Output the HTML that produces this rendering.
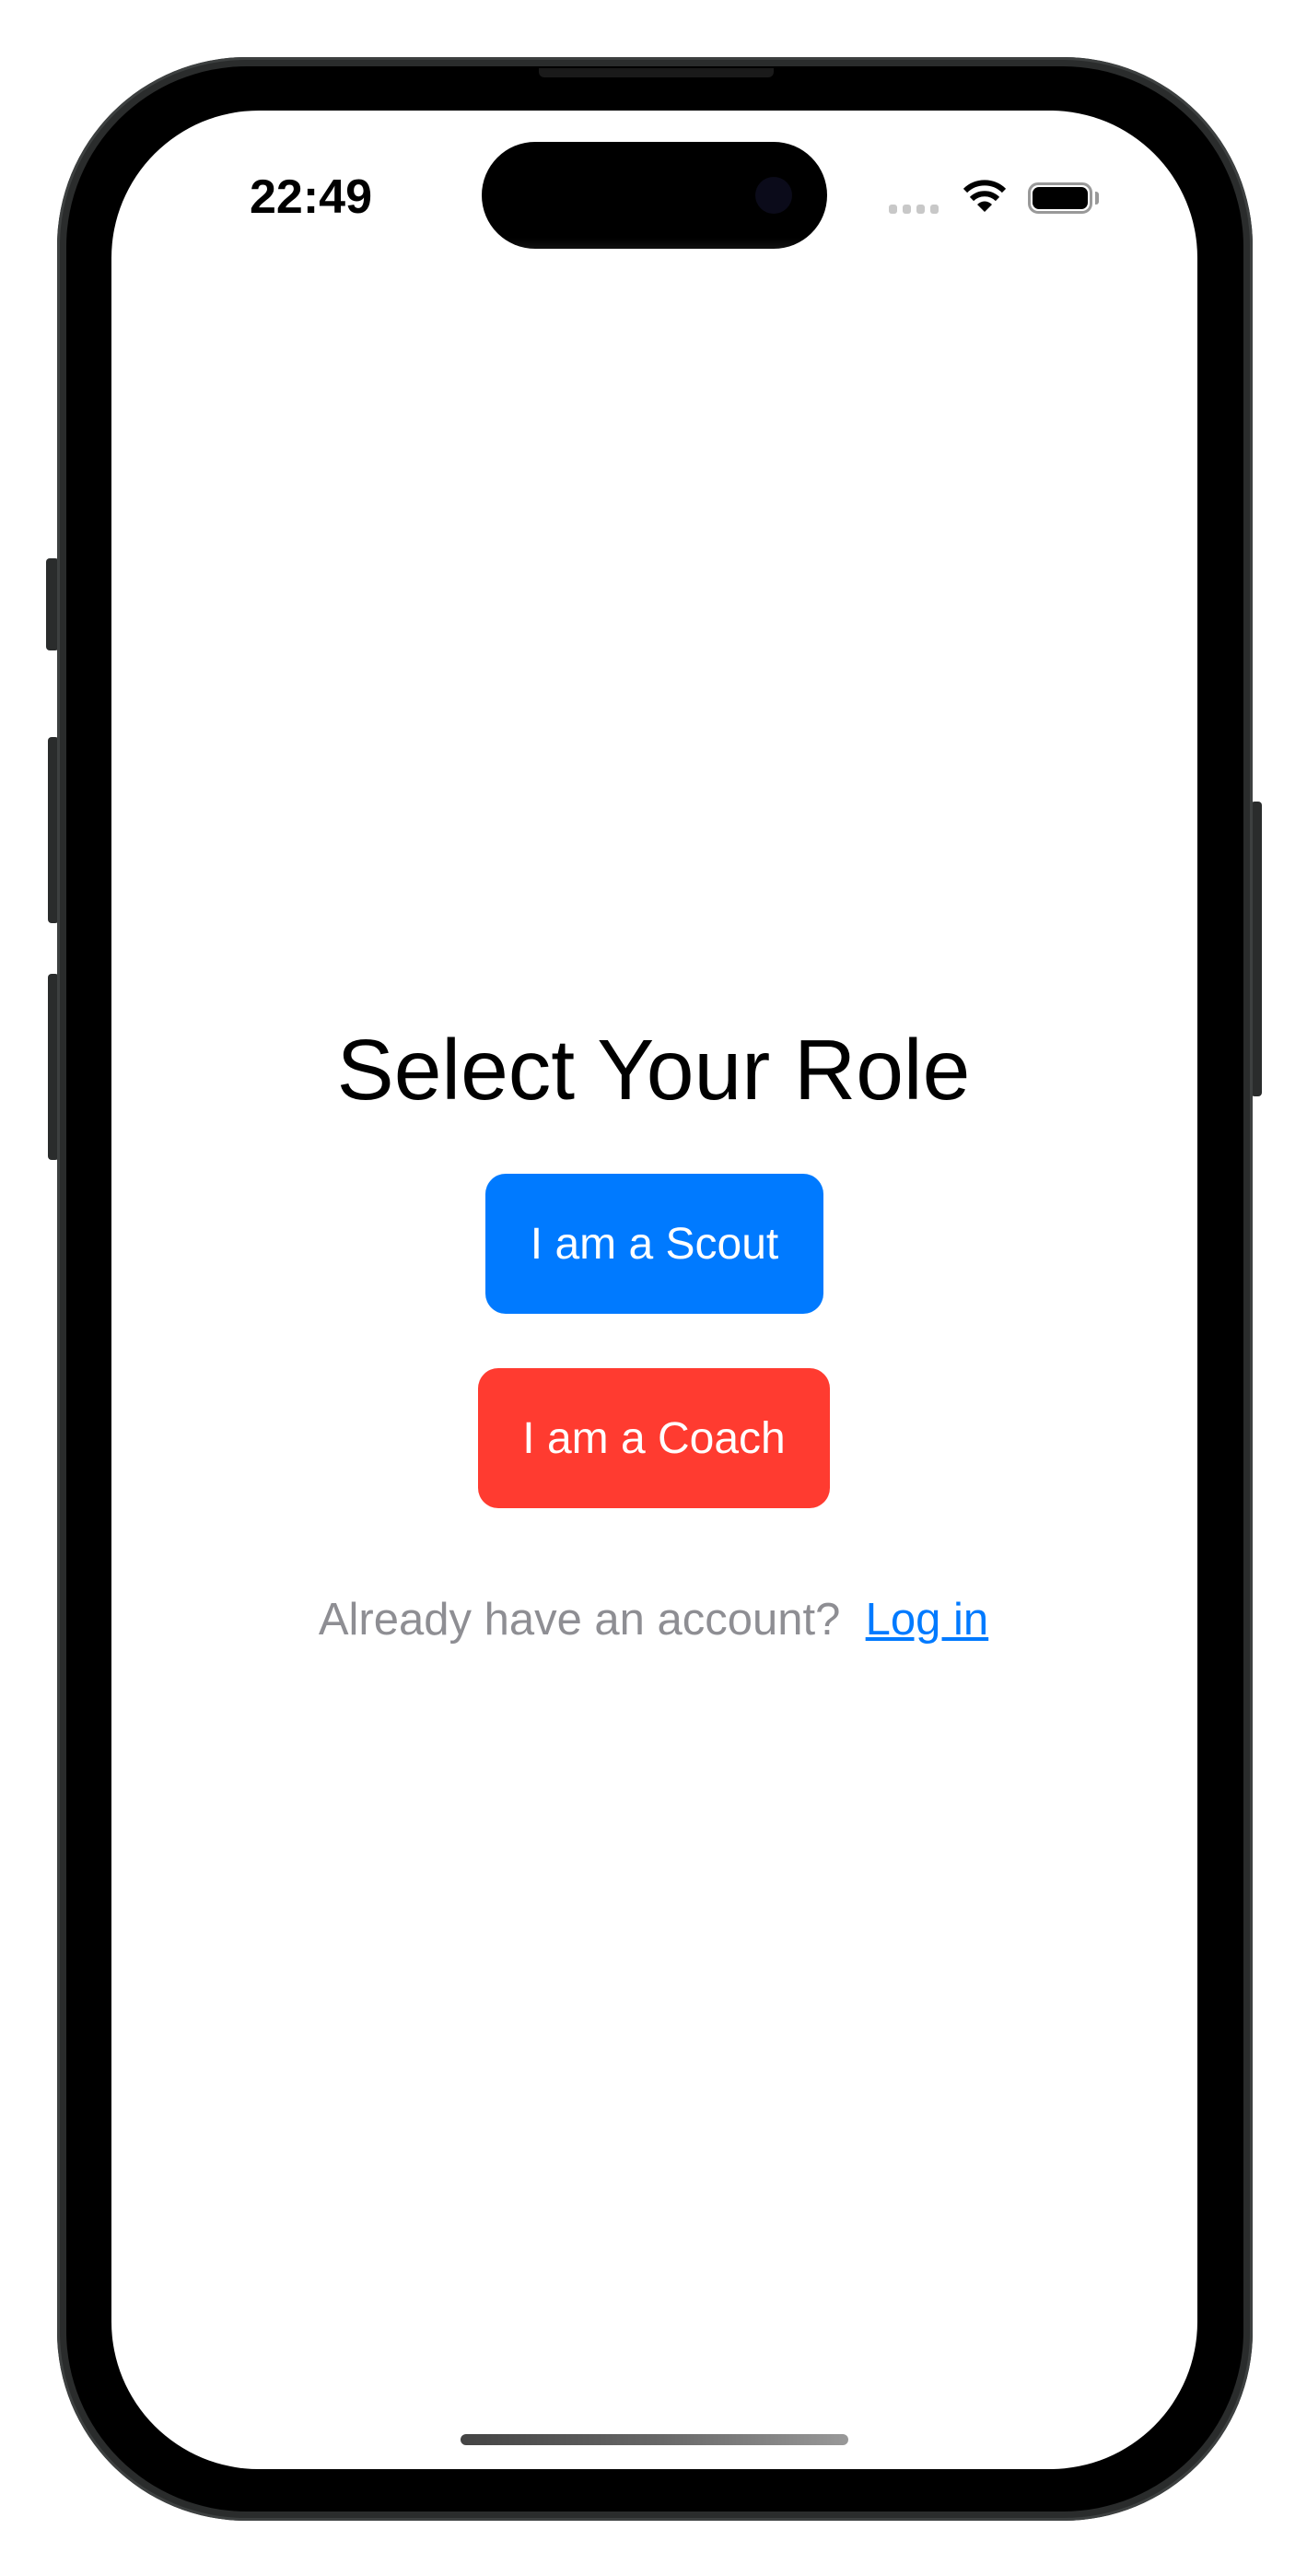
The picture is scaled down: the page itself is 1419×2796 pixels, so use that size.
<!DOCTYPE html>
<html><head><meta charset="utf-8"><style>
html,body{margin:0;padding:0;background:#fff;width:1419px;height:2796px;overflow:hidden;font-family:"Liberation Sans",sans-serif}
.abs{position:absolute}
.frame{left:62px;top:62px;width:1298px;height:2674px;border-radius:205px;background:#2a2c2c;box-shadow:inset 0 0 0 3px #3d4040}
.bezel{left:72px;top:72px;width:1278px;height:2654px;border-radius:196px;background:#000}
.screen{left:121px;top:120px;width:1179px;height:2560px;border-radius:160px;background:#fff;overflow:hidden}
.btn{position:absolute;color:#fff;font-size:48px;display:flex;align-items:center;justify-content:center;border-radius:22px}
</style></head><body>
<div class="abs" style="left:50px;top:606px;width:14px;height:100px;background:#2a2c2c;border-radius:4px"></div>
<div class="abs" style="left:52px;top:800px;width:12px;height:202px;background:#2a2c2c;border-radius:4px"></div>
<div class="abs" style="left:52px;top:1057px;width:12px;height:202px;background:#2a2c2c;border-radius:4px"></div>
<div class="abs" style="left:1358px;top:870px;width:12px;height:320px;background:#2a2c2c;border-radius:4px"></div>
<div class="abs frame"></div>
<div class="abs bezel"></div>
<div class="abs" style="left:585px;top:74px;width:255px;height:10px;background:#1a1a1a;border-radius:0 0 6px 6px"></div>
<div class="abs screen"></div>
<div class="abs" style="left:523px;top:154px;width:375px;height:116px;border-radius:58px;background:linear-gradient(#000,#000 90%,#111)"></div>
<div class="abs" style="left:820px;top:192px;width:40px;height:40px;border-radius:50%;background:#0b0b1a"></div>
<div class="abs" style="left:271px;top:184px;font-size:52px;font-weight:bold;color:#000">22:49</div>
<div class="abs" style="left:965px;top:222px;width:56px;height:10px">
<span class="abs" style="left:0;width:9px;height:10px;background:#c8c8c8;border-radius:3px"></span>
<span class="abs" style="left:15px;width:9px;height:10px;background:#c8c8c8;border-radius:3px"></span>
<span class="abs" style="left:30px;width:9px;height:10px;background:#c8c8c8;border-radius:3px"></span>
<span class="abs" style="left:45px;width:9px;height:10px;background:#c8c8c8;border-radius:3px"></span>
</div>
<svg class="abs" style="left:1045px;top:192px" width="48" height="40" viewBox="0 0 48 40">
<path d="M24 38 L16 30 A11 11 0 0 1 32 30 Z" fill="#000"/>
<path d="M10 24 A20 20 0 0 1 38 24" stroke="#000" stroke-width="6" fill="none"/>
<path d="M3 15 A30 30 0 0 1 45 15" stroke="#000" stroke-width="6" fill="none"/>
</svg>
<div class="abs" style="left:1116px;top:198px;width:70px;height:34px;border:3px solid #999;border-radius:11px;box-sizing:border-box"></div>
<div class="abs" style="left:1121px;top:203px;width:60px;height:24px;background:#000;border-radius:7px"></div>
<div class="abs" style="left:1189px;top:208px;width:4px;height:14px;background:#999;border-radius:0 3px 3px 0"></div>
<div class="abs" style="left:0;width:1419px;top:1106px;text-align:center;font-size:93px;color:#000;line-height:110px">Select Your Role</div>
<div class="btn" style="left:527px;top:1274px;width:367px;height:152px;background:#007aff">I am a Scout</div>
<div class="btn" style="left:519px;top:1485px;width:382px;height:152px;background:#ff3b30">I am a Coach</div>
<div class="abs" style="left:0;width:1419px;top:1728px;text-align:center;font-size:49px;color:#8e8e93;line-height:60px">Already have an account?&nbsp; <span style="color:#007aff;text-decoration:underline">Log in</span></div>
<div class="abs" style="left:500px;top:2642px;width:421px;height:12px;border-radius:6px;background:linear-gradient(90deg,#444,#666,#999)"></div>
</body></html>
